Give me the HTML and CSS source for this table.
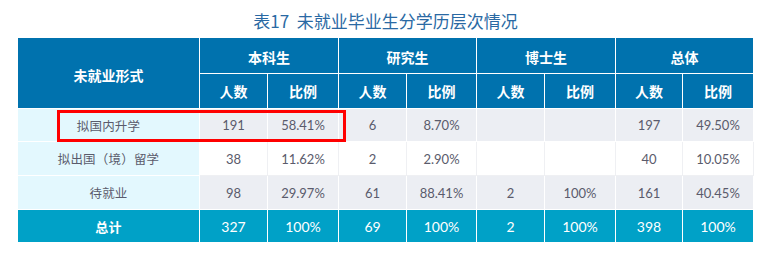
FILE: index.html
```html
<!DOCTYPE html>
<html lang="zh">
<head>
<meta charset="utf-8">
<link rel="stylesheet" href="styles.css">
</head>
<body>
<div class="page">
  <h1 class="title">表17&nbsp;&nbsp;未就业毕业生分学历层次情况</h1>
  <div class="table-wrap">
    <table class="data">
      <colgroup>
        <col class="c-label">
        <col class="c68"><col class="c71">
        <col class="c68"><col class="c70">
        <col class="c68"><col class="c71">
        <col class="c67"><col class="c71">
      </colgroup>
      <thead>
        <tr class="hr1">
          <th rowspan="2">未就业形式</th>
          <th colspan="2">本科生</th>
          <th colspan="2">研究生</th>
          <th colspan="2">博士生</th>
          <th colspan="2">总体</th>
        </tr>
        <tr class="hr2">
          <th>人数</th><th>比例</th>
          <th>人数</th><th>比例</th>
          <th>人数</th><th>比例</th>
          <th>人数</th><th>比例</th>
        </tr>
      </thead>
      <tbody>
        <tr class="alt r1">
          <td class="label">拟国内升学</td>
          <td>191</td><td>58.41%</td>
          <td>6</td><td>8.70%</td>
          <td></td><td></td>
          <td>197</td><td>49.50%</td>
        </tr>
        <tr class="plain r2">
          <td class="label">拟出国（境）留学</td>
          <td>38</td><td>11.62%</td>
          <td>2</td><td>2.90%</td>
          <td></td><td></td>
          <td>40</td><td>10.05%</td>
        </tr>
        <tr class="alt r3">
          <td class="label">待就业</td>
          <td>98</td><td>29.97%</td>
          <td>61</td><td>88.41%</td>
          <td>2</td><td>100%</td>
          <td>161</td><td>40.45%</td>
        </tr>
      </tbody>
      <tfoot>
        <tr class="total">
          <td class="label">总计</td>
          <td>327</td><td>100%</td>
          <td>69</td><td>100%</td>
          <td>2</td><td>100%</td>
          <td>398</td><td>100%</td>
        </tr>
      </tfoot>
    </table>
    <div class="highlight"></div>
  </div>
</div>
</body>
</html>
```

FILE: styles.css
```css
html, body {
  margin: 0;
  padding: 0;
  background: #ffffff;
}

body {
  font-family: "Noto Sans CJK SC", "Noto Sans", sans-serif;
}

.page {
  width: 737px;
  margin-left: 17px;
}

.title {
  margin: 0;
  padding-top: 8px;
  height: 29px;
  line-height: 25px;
  font-size: 17px;
  font-weight: normal;
  color: #2a69a3;
  text-align: center;
}

.table-wrap {
  position: relative;
}

.data {
  width: 737px;
  table-layout: fixed;
  border-collapse: collapse;
  border: 1px solid #b4b8c2;
}

.c-label { width: 182px; }
.c67 { width: 67px; }
.c68 { width: 68px; }
.c70 { width: 70px; }
.c71 { width: 71px; }

.data th,
.data td {
  padding: 0;
  text-align: center;
  vertical-align: middle;
  border: 1px solid #ffffff;
}

.data th {
  background: #0072ae;
  color: #ffffff;
  font-size: 14px;
  font-weight: bold;
}

.hr1 { height: 36px; }
.hr2 { height: 35px; }
.r1 { height: 33px; }
.r2 { height: 34px; }
.r3 { height: 34px; }
.total { height: 33px; }

.hr1 th { padding-top: 3px; }

.data td {
  font-family: "Lato", "Noto Sans CJK SC", sans-serif;
  font-size: 13px;
  color: #5a5b6c;
}

.data td.label {
  font-family: "Noto Sans CJK SC", sans-serif;
  font-size: 12.5px;
  letter-spacing: 0.2px;
  background: #e3f8fe;
}

.alt td {
  background: #eceef3;
}

.plain td {
  background: #ffffff;
  border-color: #eff0f3;
}

.plain td.label {
  border-color: #ffffff;
}

.data .total td {
  background: #00a1c7;
  color: #ffffff;
  font-size: 14px;
  border-color: #ffffff;
}

.data .total td.label {
  background: #00a1c7;
  font-weight: bold;
  font-size: 13px;
}

.highlight {
  position: absolute;
  left: 40px;
  top: 73px;
  width: 283px;
  height: 26px;
  border: 3px solid #ff0000;
}
```
